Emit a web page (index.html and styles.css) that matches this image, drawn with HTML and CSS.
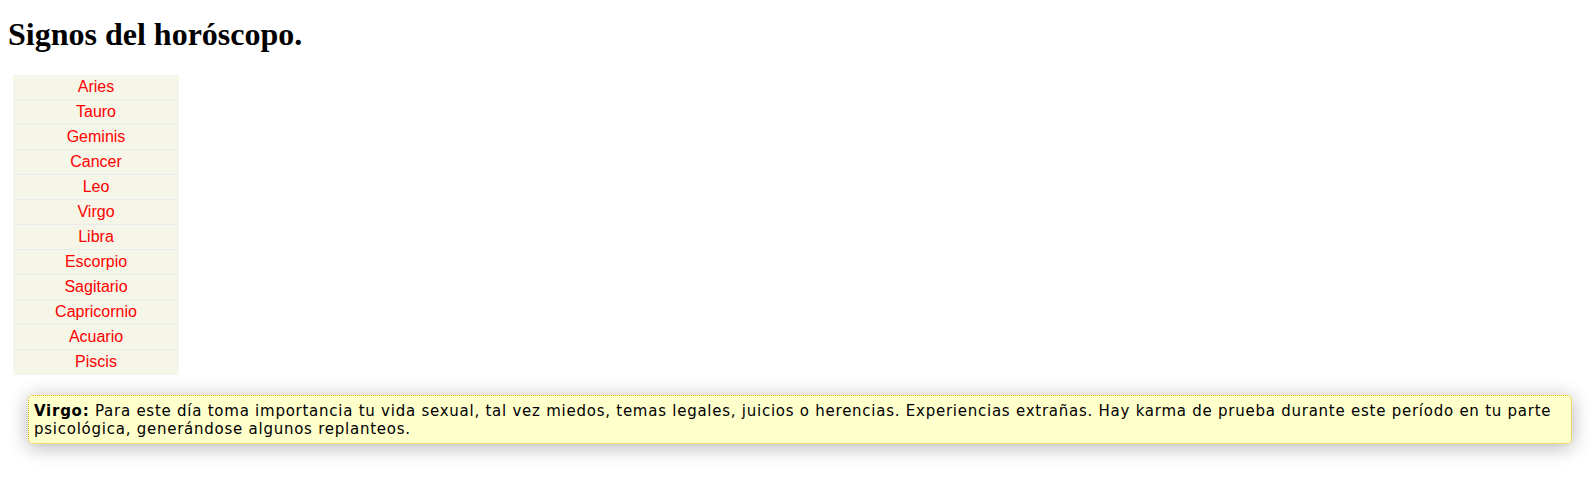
FILE: index.html
```html
<!DOCTYPE html>
<html lang="es">
<head>
<meta charset="utf-8">
<title>Signos del horóscopo</title>
<link rel="stylesheet" href="styles.css">
</head>
<body>
<h1 class="title">Signos del horóscopo.</h1>
<ul class="signs">
  <li><a href="#">Aries</a></li>
  <li><a href="#">Tauro</a></li>
  <li><a href="#">Geminis</a></li>
  <li><a href="#">Cancer</a></li>
  <li><a href="#">Leo</a></li>
  <li><a href="#">Virgo</a></li>
  <li><a href="#">Libra</a></li>
  <li><a href="#">Escorpio</a></li>
  <li><a href="#">Sagitario</a></li>
  <li><a href="#">Capricornio</a></li>
  <li><a href="#">Acuario</a></li>
  <li><a href="#">Piscis</a></li>
</ul>
<div class="result"><b>Virgo:</b> Para este día toma importancia tu vida sexual, tal vez miedos, temas legales, juicios o herencias. Experiencias extrañas. Hay karma de prueba durante este período en tu parte psicológica, generándose algunos replanteos.</div>
</body>
</html>
```
FILE: styles.css
```css
html, body {
  margin: 0;
}
body {
  padding: 8px 8px 42px;
  font-family: "Liberation Serif", "Times New Roman", serif;
  background: #fff;
}
.title {
  font-size: 32px;
  font-weight: bold;
  margin: 10px 0 25px;
  line-height: 32px;
  color: #000;
}
.signs {
  list-style: none;
  margin: 0 0 20px 5px;
  padding: 0;
  width: 166px;
  background: #f5f5e8;
  font-family: "Liberation Sans", Arial, sans-serif;
  font-size: 16px;
}
.signs li {
  text-align: center;
  line-height: 18px;
  padding: 3px 0;
  border-bottom: 1px solid #ececec;
}
.signs li:last-child {
  border-bottom: 1px solid #f3f3f3;
}
.signs a {
  color: #ff0000;
  text-decoration: none;
}
.result {
  margin: 0 14px 0 20px;
  padding: 6px 5px 5px;
  background: #ffffcc;
  border: 1px dotted #f0b000;
  border-radius: 5px;
  box-shadow: 0 3px 20px rgba(0, 0, 0, 0.3);
  font-family: "DejaVu Sans", Verdana, sans-serif;
  font-size: 15px;
  letter-spacing: 0.75px;
  line-height: 18px;
  color: #000;
}
```
